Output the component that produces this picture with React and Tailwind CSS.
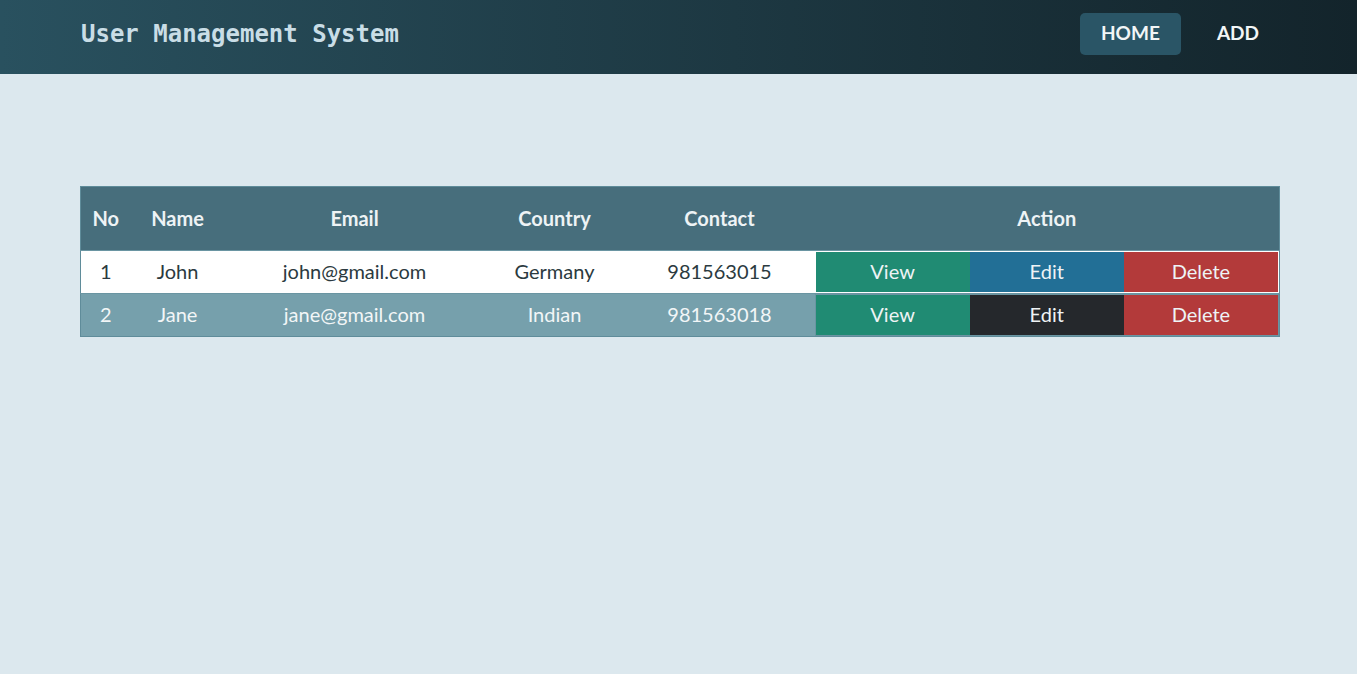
export default function App() {
  const rows = [
    { no: 1, name: "John", email: "john@gmail.com", country: "Germany", contact: "981563015", edit: "bg-[#226f96]", row: "bg-white text-[#2b3a40]", btnBorder: "border-white" },
    { no: 2, name: "Jane", email: "jane@gmail.com", country: "Indian", contact: "981563018", edit: "bg-[#25282c]", row: "bg-[#76a0ac] text-[#f2f6f7]", btnBorder: "border-[#6a95a2]" },
  ];
  const font = { fontFamily: "Lato, 'Open Sans', sans-serif" };
  return (
    <div className="min-h-[674px] bg-[#dce8ee]" style={font}>
      <header className="h-[74px] bg-gradient-to-r from-[#29515f] to-[#13242b] flex items-center justify-between pl-[81px] pr-[78px] pb-[6px]">
        <h1 className="text-[24px] font-bold text-[#c9dde6]" style={{ fontFamily: "'DejaVu Sans Mono', 'Liberation Mono', monospace" }}>
          User Management System
        </h1>
        <nav className="flex items-center gap-[16px]">
          <a className="h-[42px] w-[101px] rounded-[5px] bg-[#2a5566] text-[#f2f6f7] text-[19px] font-bold flex items-center justify-center pb-[2px]">HOME</a>
          <a className="h-[42px] px-[20px] text-[#f2f6f7] text-[19px] font-bold flex items-center justify-center pb-[2px]">ADD</a>
        </nav>
      </header>
      <main className="pt-[112px] px-[80px]">
        <table className="w-[1200px] border border-[#5f8c9a] border-collapse text-[20px]">
          <thead>
            <tr className="h-[64px] bg-[#476e7c] text-[#eef3f5]">
              <th className="w-[50px] font-bold pb-[2px]">No</th>
              <th className="w-[94px] font-bold pb-[2px]">Name</th>
              <th className="w-[260px] font-bold pb-[2px]">Email</th>
              <th className="w-[140px] font-bold pb-[2px]">Country</th>
              <th className="w-[190px] font-bold pb-[2px]">Contact</th>
              <th className="font-bold pb-[2px]">Action</th>
            </tr>
          </thead>
          <tbody>
            {rows.map((r) => (
              <tr key={r.no} className={`h-[43px] ${r.row} border-t border-[#6a95a2]`}>
                <td className="text-center pb-[3px]">{r.no}</td>
                <td className="text-center pb-[3px]">{r.name}</td>
                <td className="text-center pb-[3px]">{r.email}</td>
                <td className="text-center pb-[3px]">{r.country}</td>
                <td className="text-center pb-[3px]">{r.contact}</td>
                <td className="p-0">
                  <div className={`flex border ${r.btnBorder} text-[#eef3f5]`}>
                    <div className="flex-1 h-[40px] bg-[#208b73] flex items-center justify-center pb-[2px]">View</div>
                    <div className={`flex-1 h-[40px] ${r.edit} flex items-center justify-center pb-[2px]`}>Edit</div>
                    <div className="flex-1 h-[40px] bg-[#b33a3a] flex items-center justify-center pb-[2px]">Delete</div>
                  </div>
                </td>
              </tr>
            ))}
          </tbody>
        </table>
      </main>
    </div>
  );
}
